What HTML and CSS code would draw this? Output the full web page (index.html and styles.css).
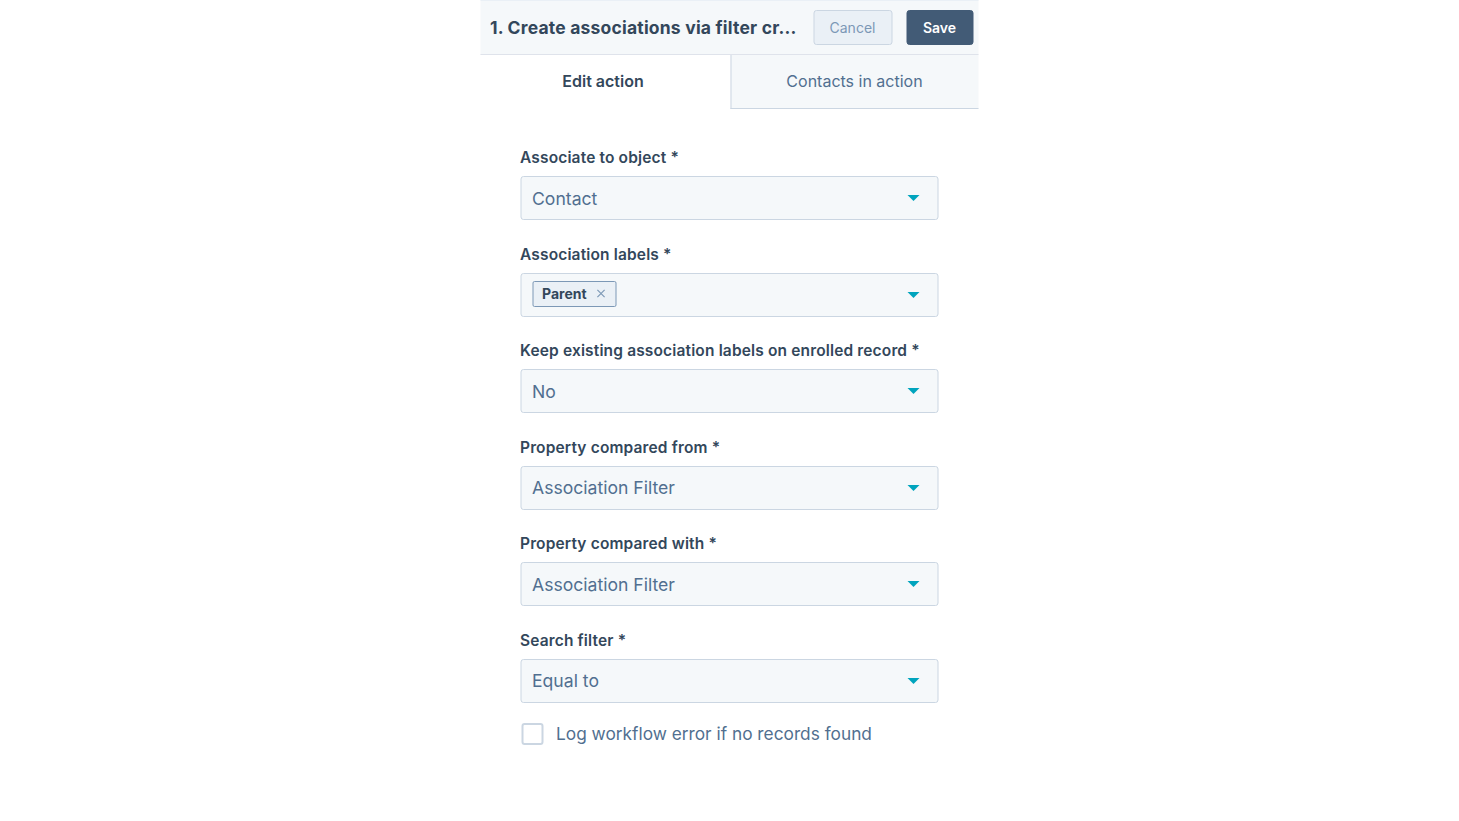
FILE: index.html
```html
<!DOCTYPE html>
<html>
<head>
<meta charset="utf-8">
<link rel="stylesheet" href="styles.css">
</head>
<body>
<div class="panel">
  <div class="header">
    <div class="title">1. Create associations via filter cr...</div>
    <button class="btn cancel">Cancel</button>
    <button class="btn save">Save</button>
  </div>
  <div class="tabs">
    <div class="tab active">Edit action</div>
    <div class="tab">Contacts in action</div>
  </div>
  <div class="form">
    <div class="field">
      <div class="label">Associate to object *</div>
      <div class="select"><span class="value">Contact</span><span class="caret"></span></div>
    </div>
    <div class="field">
      <div class="label">Association labels *</div>
      <div class="select"><span class="tag">Parent<svg class="x" viewBox="0 0 10 10" width="9" height="9"><path d="M1 1L9 9M9 1L1 9" stroke="#7c98b6" stroke-width="1.3" fill="none"/></svg></span><span class="caret"></span></div>
    </div>
    <div class="field">
      <div class="label">Keep existing association labels on enrolled record *</div>
      <div class="select"><span class="value">No</span><span class="caret"></span></div>
    </div>
    <div class="field">
      <div class="label">Property compared from *</div>
      <div class="select"><span class="value">Association Filter</span><span class="caret"></span></div>
    </div>
    <div class="field">
      <div class="label">Property compared with *</div>
      <div class="select"><span class="value">Association Filter</span><span class="caret"></span></div>
    </div>
    <div class="field">
      <div class="label">Search filter *</div>
      <div class="select"><span class="value">Equal to</span><span class="caret"></span></div>
    </div>
    <label class="check"><span class="box"></span><span class="check-text">Log workflow error if no records found</span></label>
  </div>
</div>
</body>
</html>
```
FILE: styles.css
```css
* { box-sizing: border-box; }
body {
  margin: 0;
  background: #fff;
  font-family: "Inter", "Noto Sans", sans-serif;
  color: #33475b;
}
.panel {
  width: 498px;
  margin: 0 auto;
  transform: translateX(-0.5px);
}
.header {
  height: 55px;
  background: #f5f8fa;
  border-bottom: 1px solid #dfe3eb;
  border-top: 1px solid #eaf0f6;
  display: flex;
  align-items: center;
  padding: 0 5px 0 10px;
}
.title {
  flex: 1;
  font-size: 17.5px;
  font-weight: 700;
  color: #33475b;
  white-space: nowrap;
  letter-spacing: 0.2px;
}
.btn {
  font-family: inherit;
  height: 35px;
  border-radius: 3px;
  font-size: 14px;
  padding: 0;
  cursor: pointer;
}
.cancel {
  width: 79px;
  background: #eaf0f6;
  border: 1px solid #cbd6e2;
  color: #7c98b6;
  margin-right: 14px;
}
.save {
  width: 67px;
  background: #425b76;
  border: 1px solid #425b76;
  color: #fff;
  font-weight: 600;
}
.tabs {
  display: flex;
  height: 54px;
}
.tab {
  flex: 0 0 248px;
  display: flex;
  align-items: center;
  justify-content: center;
  font-size: 16px;
  color: #516f90;
  background: #f5f8fa;
  border-left: 1px solid #cbd6e2;
  border-bottom: 1px solid #cbd6e2;
  padding-bottom: 2px;
}
.tab.active {
  flex: 0 0 250px;
  background: #fff;
  border: none;
  color: #33475b;
  font-weight: 600;
  padding-right: 4px;
}
.form {
  padding: 38px 40px 0 40px;
}
.field {
  margin-bottom: 23.6px;
}
.label {
  font-size: 15.5px;
  font-weight: 600;
  line-height: 21px;
  margin-bottom: 8px;
  color: #33475b;
  letter-spacing: 0.15px;
}
.select {
  height: 44px;
  background: #f5f8fa;
  border: 1px solid #cbd6e2;
  border-radius: 3px;
  display: flex;
  align-items: center;
  padding: 0 18px 0 11px;
}
.value {
  flex: 1;
  font-size: 17.6px;
  color: #516f90;
}
.caret {
  margin-left: auto;
  width: 0;
  height: 0;
  border-left: 6px solid transparent;
  border-right: 6px solid transparent;
  border-top: 6px solid #00a4bd;
}
.tag {
  display: inline-flex;
  align-items: center;
  height: 26px;
  padding: 0 10px 0 9px;
  background: #eaf0f6;
  border: 1px solid #7c98b6;
  border-radius: 2px;
  font-size: 14px;
  font-weight: 700;
  color: #33475b;
  margin-bottom: 2px;
}
.tag .x { margin-left: 10px; }
.check {
  display: flex;
  align-items: center;
  margin-top: -4px;
}
.box {
  width: 22px;
  height: 22px;
  border: 2px solid #cbd6e2;
  border-radius: 3px;
  background: #fff;
  margin-left: 1px;
  margin-right: 13px;
}
.check-text {
  font-size: 17.3px;
  color: #516f90;
}
```
